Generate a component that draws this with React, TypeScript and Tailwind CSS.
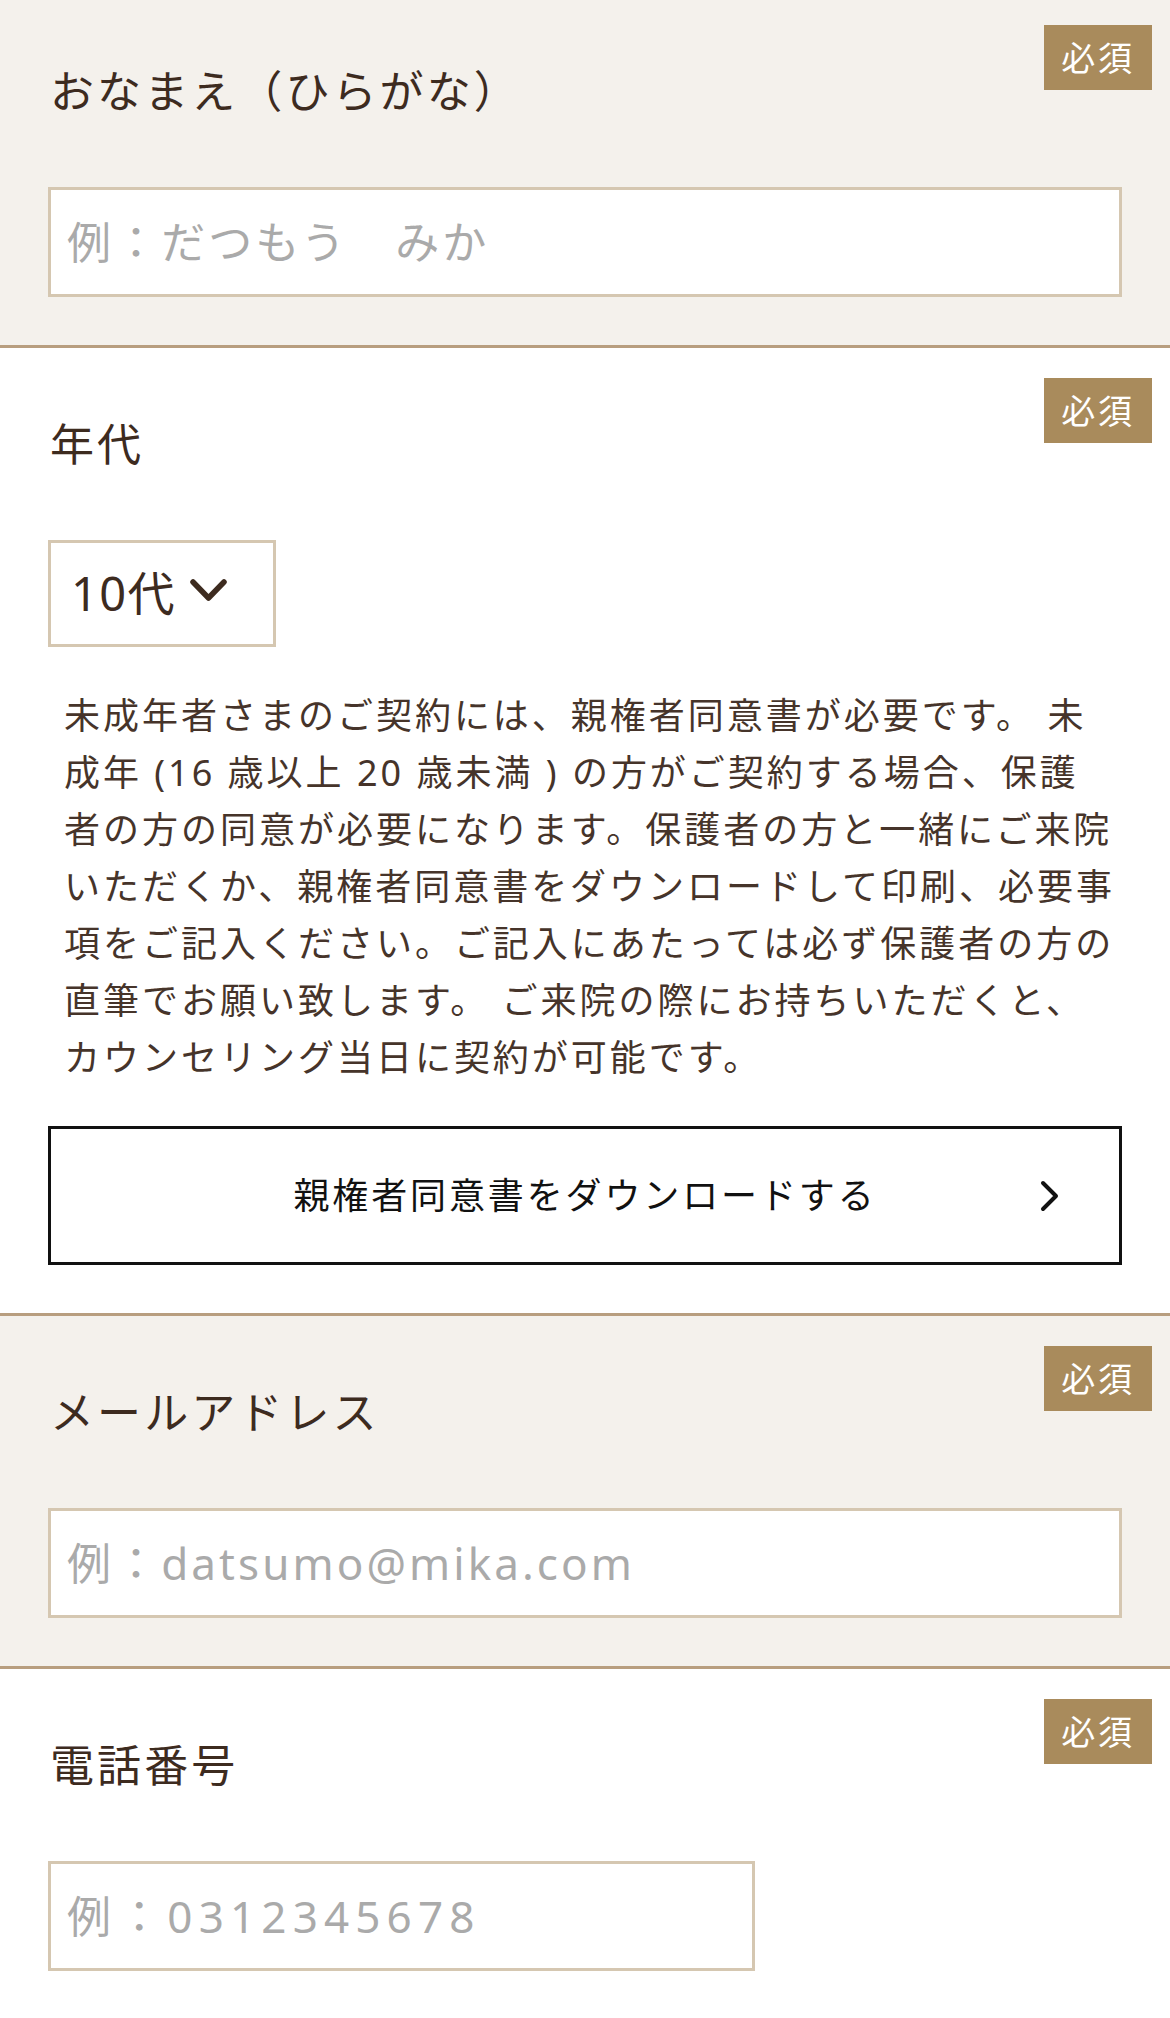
import type { ReactNode } from 'react';

const font = "font-['Noto_Sans','Noto_Sans_CJK_JP',sans-serif]";

const noticeLines = [
  '未成年者さまのご契約には、親権者同意書が必要です。 未',
  '成年 (16 歳以上 20 歳未満 ) の方がご契約する場合、保護',
  '者の方の同意が必要になります。保護者の方と一緒にご来院',
  'いただくか、親権者同意書をダウンロードして印刷、必要事',
  '項をご記入ください。ご記入にあたっては必ず保護者の方の',
  '直筆でお願い致します。 ご来院の際にお持ちいただくと、',
  'カウンセリング当日に契約が可能です。',
];

function Badge({ top }: { top: string }) {
  return (
    <span
      className={`absolute ${top} right-[18px] flex h-[65px] w-[108px] items-center justify-center bg-[#a98b5c] text-[34px] leading-none tracking-[0.08em] text-white`}
    >
      必須
    </span>
  );
}

function Field({
  label,
  tinted,
  first,
  children,
}: {
  label: string;
  tinted?: boolean;
  first?: boolean;
  children: ReactNode;
}) {
  return (
    <section
      className={`relative border-b-[3px] border-[#b89e7f] px-[48px] pb-[48px] ${
        first ? 'pt-[67px]' : 'pt-[72px]'
      } ${tinted ? 'bg-[#f4f1ec]' : 'bg-white'}`}
    >
      <Badge top={first ? 'top-[25px]' : 'top-[30px]'} />
      <h2 className="h-[48px] pl-[2px] text-[44px] font-normal leading-[48px] tracking-[0.07em] text-[#3d2b1f]">
        {label}
      </h2>
      <div className="mt-[72px]">{children}</div>
    </section>
  );
}

function TextInput({
  placeholder,
  wide = true,
  digits = false,
}: {
  placeholder: string;
  wide?: boolean;
  digits?: boolean;
}) {
  return (
    <input
      type="text"
      placeholder={placeholder}
      className={`block h-[110px] ${wide ? 'w-full' : 'w-[707px]'} ${
        digits ? 'tracking-[0.14em]' : 'tracking-[0.07em]'
      } border-[3px] border-[#d5c7b1] bg-white px-[16px] text-[44px] text-[#3d2b1f] outline-none placeholder:text-[#aaaaaa]`}
    />
  );
}

export default function App() {
  return (
    <div className={`${font} w-[1170px] bg-white`}>
      <Field label="おなまえ（ひらがな）" tinted first>
        <TextInput placeholder="例：だつもう　みか" />
      </Field>

      <Field label="年代">
        <div className="flex h-[107px] w-[228px] items-center border-[3px] border-[#d5c7b1] bg-white pl-[20px]">
          <span className="text-[47px] leading-none tracking-[0.03em] text-[#3d2b1f]">10代</span>
          <svg
            width="37"
            height="26"
            viewBox="0 0 37 26"
            className="ml-[14px] mt-[-6px]"
            fill="none"
            stroke="#3d2b1f"
            strokeWidth="5.5"
            strokeLinecap="round"
            strokeLinejoin="round"
          >
            <path d="M3 4 L18.5 20 L34 4" />
          </svg>
        </div>

        <p className="mt-[40px] px-[16px] text-[36px] leading-[57px] tracking-[0.083em] text-[#46342a]">
          {noticeLines.map((line) => (
            <span key={line} className="block whitespace-nowrap">
              {line}
            </span>
          ))}
        </p>

        <button
          type="button"
          className="relative mt-[40px] flex h-[139px] w-full items-center justify-center border-[3px] border-[#111111] bg-white text-[36px] tracking-[0.08em] text-[#111111]"
        >
          親権者同意書をダウンロードする
          <svg
            width="22"
            height="32"
            viewBox="0 0 22 32"
            className="absolute right-[58px] top-1/2 -translate-y-1/2"
            fill="none"
            stroke="#111111"
            strokeWidth="4"
            strokeLinecap="round"
            strokeLinejoin="round"
          >
            <path d="M4 3 L17 16 L4 29" />
          </svg>
        </button>
      </Field>

      <Field label="メールアドレス" tinted>
        <TextInput placeholder="例：datsumo@mika.com" />
      </Field>

      <Field label="電話番号">
        <TextInput placeholder="例：0312345678" wide={false} digits />
      </Field>
    </div>
  );
}
